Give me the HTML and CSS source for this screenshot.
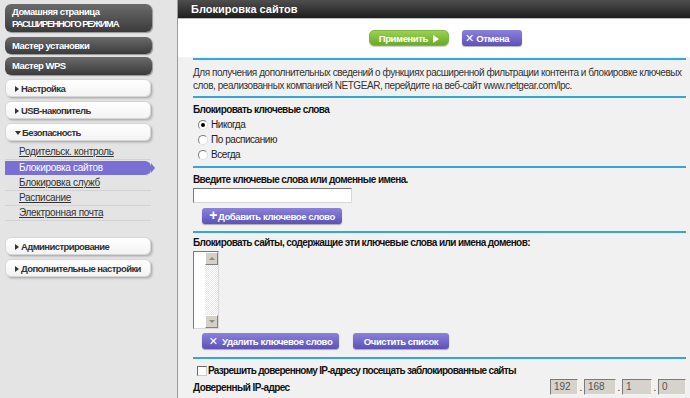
FILE: index.html
```html
<!DOCTYPE html>
<html lang="ru">
<head>
<meta charset="utf-8">
<title>Блокировка сайтов</title>
<link rel="stylesheet" href="styles.css">
</head>
<body>
<div class="page">
  <aside class="sidebar">
    <div class="dbtn dbtn-tall">Домашняя страница<br><span class="caps">РАСШИРЕННОГО РЕЖИМА</span></div>
    <div class="dbtn dbtn-gap1">Мастер установки</div>
    <div class="dbtn dbtn-gap2">Мастер WPS</div>
    <div class="wbtn wbtn-first"><span class="tri"></span>Настройка</div>
    <div class="wbtn"><span class="tri"></span>USB-накопитель</div>
    <div class="wbtn"><span class="tri tri-down"></span>Безопасность</div>
    <ul class="submenu">
      <li><a>Родительск. контроль</a></li>
      <li class="active"><a>Блокировка сайтов</a></li>
      <li><a>Блокировка служб</a></li>
      <li><a>Расписание</a></li>
      <li><a>Электронная почта</a></li>
    </ul>
    <div class="wbtn wbtn-after"><span class="tri"></span>Администрирование</div>
    <div class="wbtn"><span class="tri"></span>Дополнительные настройки</div>
  </aside>
  <main class="main">
    <div class="header">Блокировка сайтов</div>
    <div class="toolbar">
      <button class="apply">Применить <span class="play"></span></button>
      <button class="pbtn cancel"><span class="x">✕</span>Отмена</button>
    </div>
    <div class="content">
      <div class="hr"></div>
      <p class="info">Для получения дополнительных сведений о функциях расширенной фильтрации контента и блокировке ключевых слов, реализованных компанией NETGEAR, перейдите на веб-сайт www.netgear.com/lpc.</p>
      <div class="hr hr-s2"></div>
      <div class="label lbl1">Блокировать ключевые слова</div>
      <div class="radio-row"><span class="radio checked"></span>Никогда</div>
      <div class="radio-row"><span class="radio"></span>По расписанию</div>
      <div class="radio-row"><span class="radio"></span>Всегда</div>
      <div class="hr hr-s3"></div>
      <div class="label lbl1">Введите ключевые слова или доменные имена.</div>
      <div class="textbox"></div>
      <button class="pbtn add"><span class="plus">+</span>Добавить ключевое слово</button>
      <div class="hr hr-s4"></div>
      <div class="label lbl2">Блокировать сайты, содержащие эти ключевые слова или имена доменов:</div>
      <div class="listbox">
        <div class="list-area"></div>
        <div class="scrollbar">
          <div class="sb-btn"><span class="arr-up"></span></div>
          <div class="sb-track"></div>
          <div class="sb-btn"><span class="arr-down"></span></div>
        </div>
      </div>
      <div class="btn-row">
        <button class="pbtn del"><span class="x">✕</span> Удалить ключевое слово</button>
        <button class="pbtn clear">Очистить список</button>
      </div>
      <div class="hr hr-s5"></div>
      <div class="label check-row"><span class="checkbox"></span>Разрешить доверенному IP-адресу посещать заблокированные сайты</div>
      <div class="ip-row">
        <span class="label">Доверенный IP-адрес</span>
        <div class="ip">
          <span class="ipbox w28">192</span><span class="dot">.</span><span class="ipbox w32">168</span><span class="dot">.</span><span class="ipbox w30">1</span><span class="dot">.</span><span class="ipbox w28">0</span>
        </div>
      </div>
    </div>
  </main>
</div>
</body>
</html>
```

FILE: styles.css
```css
* { box-sizing: border-box; }
html, body { margin: 0; padding: 0; }
body {
  font-family: "Liberation Sans", Arial, sans-serif;
  font-size: 10px;
  color: #222;
  width: 690px;
  height: 398px;
  overflow: hidden;
  background: #f1f1f1;
}
.page { display: flex; height: 398px; }

/* Sidebar */
.sidebar {
  width: 178px;
  flex: none;
  background: #e4e4e4;
  border-right: 1px solid #9c9c9c;
  padding: 4px 0 0 5px;
}
.dbtn {
  width: 147px;
  height: 18px;
  line-height: 18px;
  padding-left: 7px;
  color: #fff;
  font-weight: bold;
  font-size: 9.5px;
  letter-spacing: -0.5px;
  white-space: nowrap;
  border-radius: 6px;
  background: linear-gradient(#6b6b6b, #3b3b3b);
  box-shadow: 1px 1px 1px rgba(0,0,0,0.35);
}
.dbtn-tall { height: 28px; line-height: 12px; padding-top: 2px; }
.caps { letter-spacing: -1.1px; }
.dbtn-gap1 { margin-top: 5px; height: 17px; line-height: 17px; }
.dbtn-gap2 { margin-top: 3px; }
.wbtn {
  width: 146px;
  height: 18px;
  line-height: 17px;
  margin-top: 4px;
  padding-left: 9px;
  font-weight: bold;
  font-size: 9.5px;
  letter-spacing: -0.6px;
  white-space: nowrap;
  color: #333;
  background: linear-gradient(#ffffff, #f3f3f3);
  border: 1px solid #d6d6d6;
  border-radius: 6px;
  box-shadow: 1px 1px 0 #b4b4b4, 2px 2px 2px rgba(0,0,0,0.15);
}
.wbtn-first { margin-top: 4px; }
.wbtn-after { margin-top: 16px; }
.tri {
  display: inline-block;
  width: 0; height: 0;
  border-top: 3px solid transparent;
  border-bottom: 3px solid transparent;
  border-left: 4px solid #333;
  margin-right: 2px;
  vertical-align: 0;
}
.tri.tri-down {
  border-left: 3px solid transparent;
  border-right: 3px solid transparent;
  border-top: 4px solid #333;
  border-bottom: 0;
  margin-right: 1px;
  vertical-align: 1px;
}
.submenu {
  list-style: none;
  margin: 4px 0 0 0;
  padding: 0;
  width: 146px;
}
.submenu li {
  height: 15px;
  line-height: 14px;
  padding-left: 14px;
  border-bottom: 1px solid #d2d2d2;
  font-size: 10px;
  letter-spacing: -0.3px;
}
.submenu li a { color: #333; text-decoration: underline; }
.submenu li.active {
  position: relative;
  background: #7a70d4;
  border-bottom-color: #e4e4e4;
  margin-top: 1px;
  width: 146px;
  border-radius: 0 6px 6px 0;
}
.submenu li.active a { color: #fff; text-decoration: none; }
.submenu li.active::after {
  content: "";
  position: absolute;
  right: -4px; top: 2px;
  width: 0; height: 0;
  border-top: 5px solid transparent;
  border-bottom: 5px solid transparent;
  border-left: 4px solid #7a70d4;
}

/* Main */
.main { flex: 1; display: flex; flex-direction: column; background: #f1f1f1; }
.header {
  height: 19px;
  line-height: 18px;
  padding-left: 13px;
  color: #fff;
  font-weight: bold;
  font-size: 11px;
  background: linear-gradient(#4e4e4e, #1e1e1e);
  border-bottom: 1px solid #bdbdbd;
}
.toolbar {
  height: 38px;
  background: #fff;
  display: flex;
  align-items: flex-start;
  padding: 11px 0 0 191px;
  gap: 13px;
}
button {
  font-family: "Liberation Sans", Arial, sans-serif;
  font-weight: bold;
  font-size: 9.5px;
  letter-spacing: -0.4px;
  color: #fff;
  border: 0;
  padding: 0;
  cursor: pointer;
  white-space: nowrap;
}
.apply {
  width: 80px;
  height: 16px;
  border-radius: 5px;
  background: linear-gradient(#9bd14f, #6aa92a);
  border: 1px solid #7fb843;
  box-shadow: 0 1px 1px rgba(0,0,0,0.2);
}
.play {
  display: inline-block;
  width: 0; height: 0;
  border-top: 4px solid transparent;
  border-bottom: 4px solid transparent;
  border-left: 6px solid #fff;
  margin-left: 3px;
  vertical-align: -1px;
}
.pbtn {
  height: 16px;
  border-radius: 3px;
  background: linear-gradient(#8b82dc, #5c52b8);
  box-shadow: 0 1px 1px rgba(0,0,0,0.3);
  text-align: center;
}
.cancel { width: 60px; padding: 0 0 0 3px; text-align: left; }
.x { font-family: "DejaVu Sans", sans-serif; font-size: 11px; font-weight: bold; margin-right: 2px; letter-spacing: 0; }
.plus { font-size: 14px; font-weight: bold; line-height: 10px; margin-right: 1px; }

.content { flex: 1; padding: 1px 4px 0 15px; }
.hr { height: 2px; background: #31a7da; }
.info { margin: 6px 0 0; line-height: 13px; color: #333; font-size: 10px; letter-spacing: -0.45px; }
.hr-s2 { margin-top: 4px; }
.label { font-weight: bold; font-size: 10px; letter-spacing: -0.6px; color: #111; }
.lbl1 { margin-top: 5px; line-height: 14px; }
.lbl2 { margin-top: 3px; line-height: 14px; }
.radio-row { height: 15px; line-height: 15px; padding-left: 5px; color: #222; font-size: 10px; letter-spacing: -0.45px; display: flex; align-items: center; }
.radio {
  display: inline-block;
  width: 10px; height: 10px;
  border-radius: 50%;
  border: 1px solid;
  border-color: #7a7a7a #e0e0e0 #e0e0e0 #7a7a7a;
  background: #fff;
  margin-right: 3px;
  position: relative;
}
.radio.checked::after {
  content: "";
  position: absolute;
  left: 2px; top: 2px;
  width: 4px; height: 4px;
  border-radius: 50%;
  background: #000;
}
.hr-s3 { margin-top: 4px; }
.textbox {
  margin-top: 1px;
  width: 159px;
  height: 15px;
  background: #fff;
  border: 1px solid;
  border-color: #7a7a7a #d8d8d8 #d8d8d8 #7a7a7a;
}
.add { display: block; margin: 5px 0 0 9px; width: 140px; }
.hr-s4 { margin-top: 7px; }
.listbox {
  margin-top: 1px;
  width: 26px;
  height: 78px;
  display: flex;
  border: 1px solid;
  border-color: #7a7a7a #d8d8d8 #d8d8d8 #7a7a7a;
  background: #fff;
}
.list-area { width: 11px; }
.scrollbar { width: 13px; display: flex; flex-direction: column; }
.sb-btn {
  height: 13px;
  background: #d4d0c8;
  border: 1px solid;
  border-color: #fff #808080 #808080 #fff;
  display: flex; align-items: center; justify-content: center;
}
.sb-track {
  flex: 1;
  background: repeating-conic-gradient(#e8e6e0 0 25%, #fff 0 50%) 0 0 / 2px 2px;
}
.arr-up, .arr-down { width: 0; height: 0; border-left: 3px solid transparent; border-right: 3px solid transparent; }
.arr-up { border-bottom: 3px solid #8a8a8a; }
.arr-down { border-top: 3px solid #8a8a8a; }
.btn-row { display: flex; gap: 14px; margin: 4px 0 0 9px; }
.del { width: 137px; }
.clear { width: 96px; }
.hr-s5 { margin-top: 8px; }
.check-row { margin-top: 5px; line-height: 14px; display: flex; align-items: center; padding-left: 4px; letter-spacing: -0.7px; }
.checkbox {
  width: 10px; height: 10px;
  background: #fff;
  border: 1px solid;
  border-color: #6a6a6a #c8c8c8 #c8c8c8 #6a6a6a;
  margin-right: 1px;
}
.ip-row { display: flex; justify-content: space-between; align-items: flex-end; margin-top: 1px; }
.ip-row .label { line-height: 14px; }
.ip { display: flex; align-items: flex-end; }
.ipbox {
  height: 16px;
  line-height: 14px;
  padding-left: 3px;
  background: #d6d3cc;
  border: 1px solid;
  border-color: #7a7a7a #f4f4f4 #f4f4f4 #7a7a7a;
  color: #555;
  font-size: 10px;
}
.w28 { width: 28px; }
.w30 { width: 30px; }
.w32 { width: 32px; }
.dot { width: 6px; text-align: center; color: #333; line-height: 14px; }
```
